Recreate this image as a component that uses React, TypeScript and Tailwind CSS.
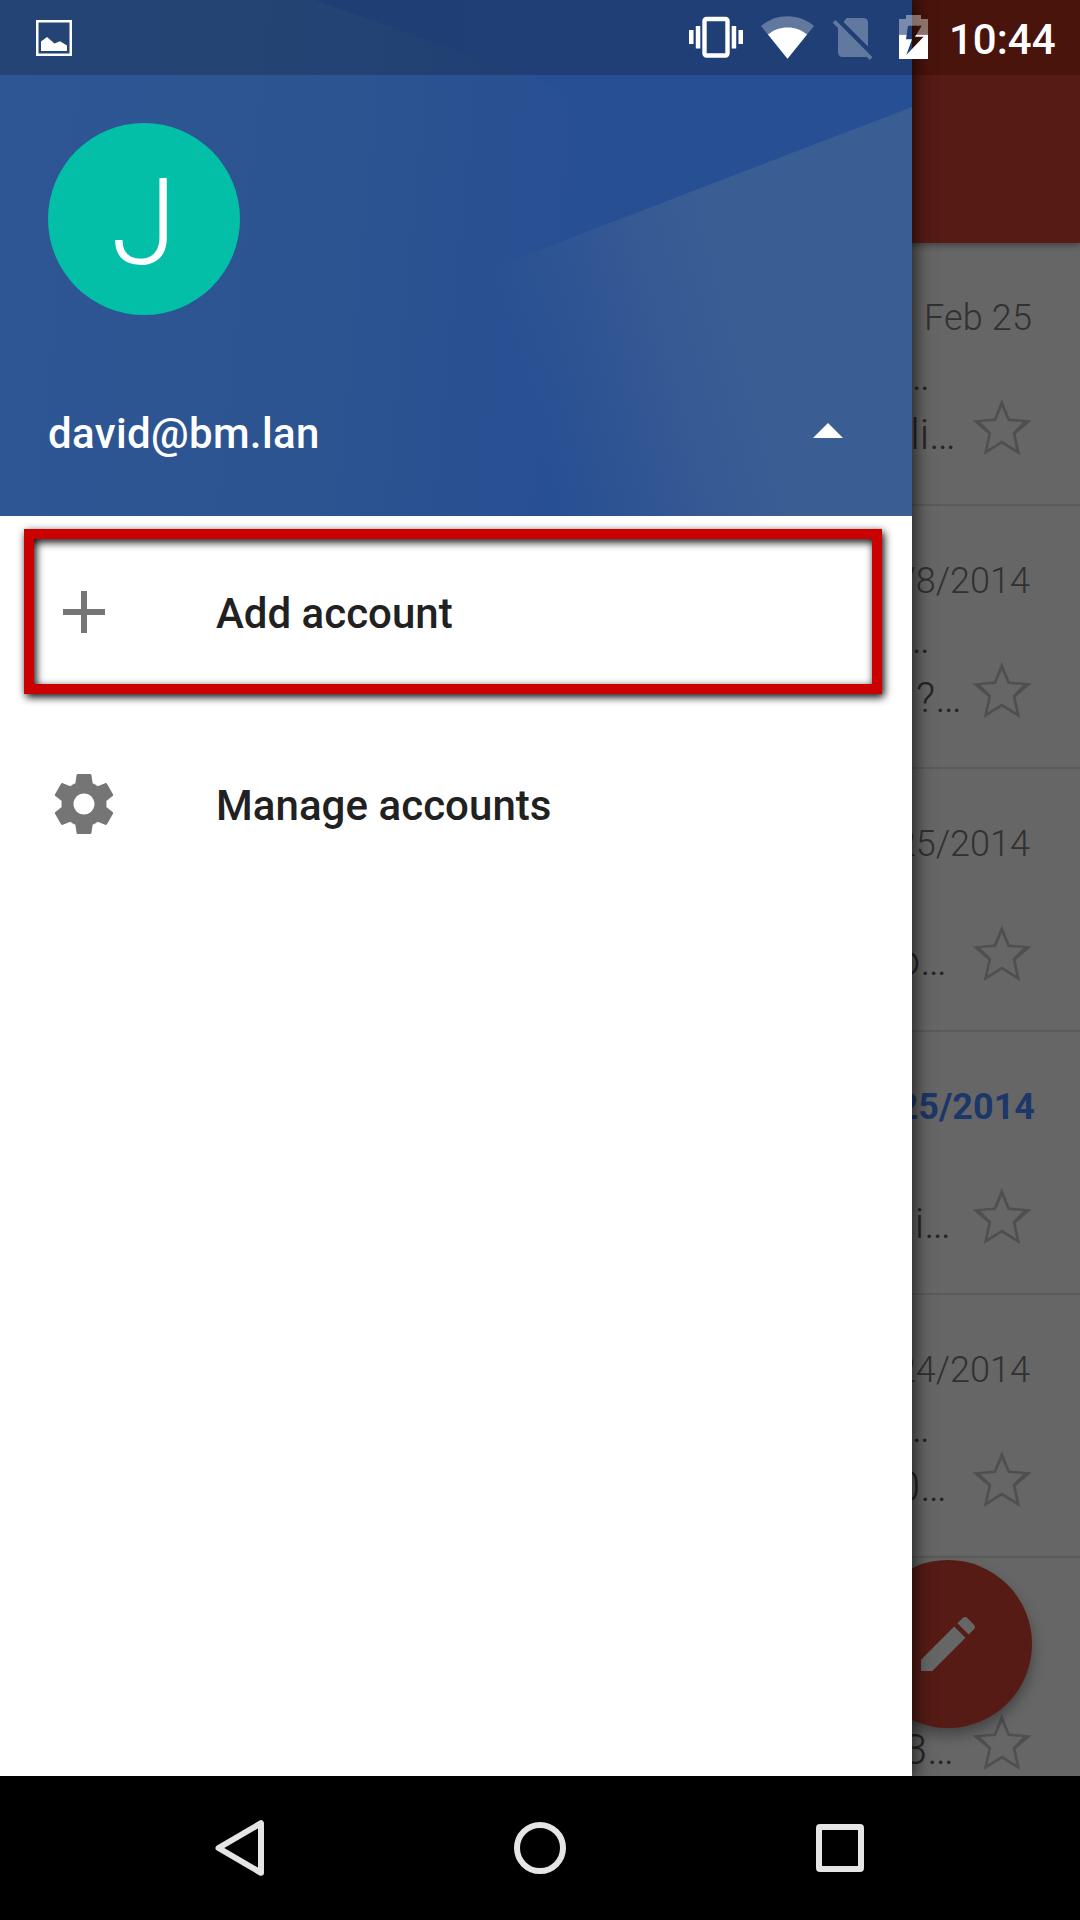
import React from "react";

type Mail = {
  date: string;
  datePad: string;
  unread?: boolean;
  subject?: string;
  snippet: string;
  snippetPad: string;
};

const mails: Mail[] = [
  { date: "Feb 25", datePad: "pr-[48px] tracking-[0.15px]", subject: "…", snippet: "li…", snippetPad: "pr-[124px]" },
  { date: "/8/2014", datePad: "pr-[50px]", subject: "…", snippet: "?…", snippetPad: "pr-[118px]" },
  { date: "25/2014", datePad: "pr-[50px]", snippet: "o…", snippetPad: "pr-[133px]" },
  { date: "25/2014", datePad: "pr-[45px]", unread: true, snippet: "i…", snippetPad: "pr-[129px]" },
  { date: "24/2014", datePad: "pr-[50px]", subject: "…", snippet: "0…", snippetPad: "pr-[133px]" },
  { date: "", datePad: "pr-[50px]", snippet: "3…", snippetPad: "pr-[126px]" },
];

function Star() {
  return (
    <svg className="absolute top-[156px] right-[48px] h-[56px] w-[60px]" viewBox="0 0 60 56" fill="#4f4f4f">
      <path
        fillRule="evenodd"
        d="M29.8 0 37.6 19.4 59.5 21.4 43.6 35 48.2 56 29.8 44.8 11.7 56 16.4 35 .5 21.4 22.1 19.4ZM29.8 8 23.8 22 8.6 23 19.2 33.8 15.6 50.4 29.8 41.6 44.2 50.4 40.6 33.8 51 23 35.8 22Z"
      />
    </svg>
  );
}

function MailRow({ mail }: { mail: Mail }) {
  return (
    <li className="relative flex h-[263px] shrink-0 flex-col items-end border-b-2 border-[#5b5b5b] pt-[54px] font-light whitespace-nowrap">
      <span
        className={
          (mail.unread
            ? "h-[50px] text-[36px] leading-[42px] font-bold text-[#1c3768] "
            : "h-[50px] text-[36px] leading-[42px] text-[#313131] ") + mail.datePad
        }
      >
        {mail.date}
      </span>
      <span className="h-[59px] pr-[150px] text-[42px] leading-[58px] text-[#252525]">{mail.subject}</span>
      <span className={"text-[42px] leading-[58px] text-[#252525] " + mail.snippetPad}>{mail.snippet}</span>
      <Star />
    </li>
  );
}

function HeaderArt() {
  return (
    <svg className="absolute inset-0 h-[516px] w-[912px]" viewBox="0 0 912 516" preserveAspectRatio="none">
      <defs>
        <linearGradient id="base" gradientUnits="userSpaceOnUse" x1="0" y1="0" x2="600" y2="60">
          <stop offset="0" stopColor="#2f5694" />
          <stop offset="0.6" stopColor="#2c5491" />
          <stop offset="1" stopColor="#274f93" />
        </linearGradient>
        <linearGradient id="facet" gradientUnits="userSpaceOnUse" x1="505" y1="330" x2="720" y2="270">
          <stop offset="0" stopColor="#3a5b93" stopOpacity="0" />
          <stop offset="0.3" stopColor="#385a94" stopOpacity="0.4" />
          <stop offset="0.65" stopColor="#385a94" stopOpacity="0.9" />
          <stop offset="1" stopColor="#3a5d94" />
        </linearGradient>
        <linearGradient id="wedge" gradientUnits="userSpaceOnUse" x1="320" y1="0" x2="600" y2="0">
          <stop offset="0" stopColor="#274e92" />
          <stop offset="1" stopColor="#274f94" />
        </linearGradient>
      </defs>
      <rect width="912" height="516" fill="url(#base)" />
      <path d="M315 0H912V107L640 212 560 88Z" fill="url(#wedge)" />
      <path d="M912 107V516H560L490 269Z" fill="url(#facet)" />
    </svg>
  );
}

function StatusBar() {
  return (
    <div className="absolute inset-x-0 top-0 z-30 flex h-[75px] items-start bg-black/20">
      <svg className="mt-[20px] ml-[36px] h-[36px] w-[36px]" viewBox="0 0 36 36" fill="none">
        <rect x="1.25" y="1.25" width="33.5" height="33.5" stroke="#fff" strokeWidth="2.5" />
        <path d="M5 31V21.500L11 17 18.500 23.500 24 21.300 31 25.500V31Z" fill="#fff" />
      </svg>
      <svg className="ml-[617px] h-[75px] w-[54px]" viewBox="0 0 54 75" fill="#fff">
        <rect x="15.500" y="19" width="23" height="36.500" rx="2" fill="none" stroke="#fff" strokeWidth="4.400" />
        <path d="M0 30h4.500v14H0zM6.800 26h4.500v22.500H6.800zM42.700 26h4.500v22.500h-4.500zM49.500 30H54v14h-4.500z" />
      </svg>
      <svg className="ml-[18px] h-[75px] w-[53px]" viewBox="0 0 53 75">
        <path d="M26.500 58.800 0 26C7 20 16.500 16.300 26.500 16.300S46 20 53 26Z" fill="#fff" fillOpacity="0.3" />
        <path d="M26.500 58.800 7 34.500C12.500 30 19 27.500 26.500 27.500S40.500 30 46 34.500Z" fill="#fff" />
      </svg>
      <svg className="ml-[18px] h-[75px] w-[42px]" viewBox="0 0 42 75" fill="#fff" fillOpacity="0.3">
        <path d="M14.500 18H31Q36 18 36 23V46.500L11.500 22Z" />
        <path d="M3.500 20 40.500 57.300 37.800 60 34.500 56.700 32.500 57H11Q6 57 6 52V28L.7 22.800Z" />
      </svg>
      <svg className="ml-[25px] h-[75px] w-[29px]" viewBox="0 0 29 75" fill="#fff">
        <path fillOpacity="0.4" d="M7 15H22V19H29V34.700H17.300L22.700 25.700H9L7.600 34.700H0V19H7Z" />
        <path d="M0 34.700H7.600L7 39.200H13L7.300 55 24.600 36.700H16L17.300 34.700H29V59H0Z" />
      </svg>
      <span className="mt-[15px] ml-[21px] text-[42px] leading-[50px] font-medium text-white">10:44</span>
    </div>
  );
}

function Drawer() {
  return (
    <aside className="absolute top-0 left-0 z-20 flex h-[1776px] w-[912px] flex-col bg-white shadow-[0_0_18px_2px_rgba(0,0,0,0.75)]">
      <header className="relative flex h-[516px] flex-col px-[48px] pt-[123px]">
        <HeaderArt />
        <div className="relative flex h-[192px] w-[192px] items-center justify-center rounded-full bg-[#03bfa7] pt-[7px] text-[120px] leading-none font-light text-white">
          J
        </div>
        <div className="relative mt-[93px] flex h-[52px] items-center justify-between pr-[21px]">
          <span className="text-[42px] leading-[52px] font-medium tracking-[0.35px] text-white">david@bm.lan</span>
          <svg className="mb-[7px] h-[15px] w-[30px]" viewBox="0 0 30 15" fill="#fff">
            <path d="M0 15 15 0 30 15Z" />
          </svg>
        </div>
      </header>
      <nav className="flex flex-col text-[42px] font-medium text-[#212121]">
        <a className="relative flex h-[192px] items-center pl-[48px]">
          <div className="absolute top-[13px] left-[24px] h-[165px] w-[858px] border-[10px] border-[#cb0000] drop-shadow-[2px_3px_4px_rgba(0,0,0,1)]" />
          <svg className="h-[72px] w-[72px]" viewBox="0 0 24 24" fill="#757575">
            <path d="M19 13h-6v6h-2v-6H5v-2h6V5h2v6h6v2z" />
          </svg>
          <span className="mt-[3px] ml-[96px]">Add account</span>
        </a>
        <a className="flex h-[192px] items-center pl-[48px]">
          <svg className="h-[72px] w-[72px]" viewBox="0 0 24 24" fill="#757575">
            <path d="M19.430 12.980c.04-.32.07-.64.07-.98s-.03-.66-.07-.98l2.110-1.650c.19-.15.24-.42.12-.64l-2-3.460c-.12-.22-.39-.3-.61-.22l-2.490 1c-.52-.4-1.080-.73-1.690-.98l-.38-2.650C14.460 2.180 14.250 2 14 2h-4c-.25 0-.46.18-.49.42l-.38 2.650c-.61.25-1.170.59-1.690.98l-2.490-1c-.23-.09-.49 0-.61.22l-2 3.460c-.13.22-.07.49.12.64l2.110 1.650c-.04.32-.07.65-.07.98s.03.66.07.98l-2.110 1.650c-.19.15-.24.42-.12.64l2 3.460c.12.22.39.3.61.22l2.490-1c.52.4 1.080.73 1.690.98l.38 2.650c.03.24.24.42.49.42h4c.25 0 .46-.18.49-.42l.38-2.650c.61-.25 1.170-.59 1.690-.98l2.490 1c.23.09.49 0 .61-.22l2-3.460c.12-.22.07-.49-.12-.64l-2.110-1.650zM12 15.500c-1.930 0-3.500-1.570-3.500-3.500s1.570-3.500 3.500-3.500 3.500 1.570 3.500 3.500-1.570 3.500-3.500 3.500z" />
          </svg>
          <span className="mt-[3px] ml-[96px] tracking-[0.05px]">Manage accounts</span>
        </a>
      </nav>
    </aside>
  );
}

function NavBar() {
  return (
    <footer className="relative z-30 flex h-[144px] items-center justify-center bg-black">
      <div className="flex w-[300px] justify-center">
        <svg className="h-[60px] w-[60px]" viewBox="0 0 60 60" fill="none" stroke="#e5e5e5" strokeWidth="6" strokeLinejoin="round">
          <path d="M8.500 30 51 5.200V54.800Z" />
        </svg>
      </div>
      <div className="flex w-[300px] justify-center">
        <div className="h-[52px] w-[52px] rounded-full border-[6px] border-[#e5e5e5]" />
      </div>
      <div className="flex w-[300px] justify-center">
        <svg className="h-[48px] w-[48px]" viewBox="0 0 48 48">
          <path fillRule="evenodd" fill="#e5e5e5" d="M4 0H44Q48 0 48 4V44Q48 48 44 48H4Q0 48 0 44V4Q0 0 4 0ZM6 6V42H42V6Z" />
        </svg>
      </div>
    </footer>
  );
}

export default function App() {
  return (
    <div className="relative flex h-[1920px] w-[1080px] flex-col overflow-hidden bg-[#666666] font-['Roboto',sans-serif]">
      <StatusBar />
      <Drawer />
      <div className="relative z-10 h-[243px] shrink-0 bg-[#561b15] shadow-[0_2px_7px_rgba(0,0,0,0.4)]">
        <div className="h-[75px] bg-[#5c190f]" />
      </div>
      <main className="relative h-[1533px] shrink-0 overflow-hidden">
        <ul className="flex flex-col">
          {mails.map((mail, i) => (
            <MailRow key={i} mail={mail} />
          ))}
        </ul>
        <div className="absolute right-[48px] bottom-[48px] flex h-[168px] w-[168px] items-center justify-center rounded-full bg-[#561b15] shadow-[0_7px_14px_rgba(0,0,0,0.35)]">
          <svg className="h-[72px] w-[72px]" viewBox="0 0 24 24" fill="#666666">
            <path d="M3 17.250V21h3.750L17.810 9.940l-3.750-3.750L3 17.250zM20.710 7.040c.39-.39.39-1.020 0-1.410l-2.340-2.340c-.39-.39-1.020-.39-1.410 0l-1.830 1.830 3.750 3.750 1.830-1.830z" />
          </svg>
        </div>
      </main>
      <NavBar />
    </div>
  );
}
